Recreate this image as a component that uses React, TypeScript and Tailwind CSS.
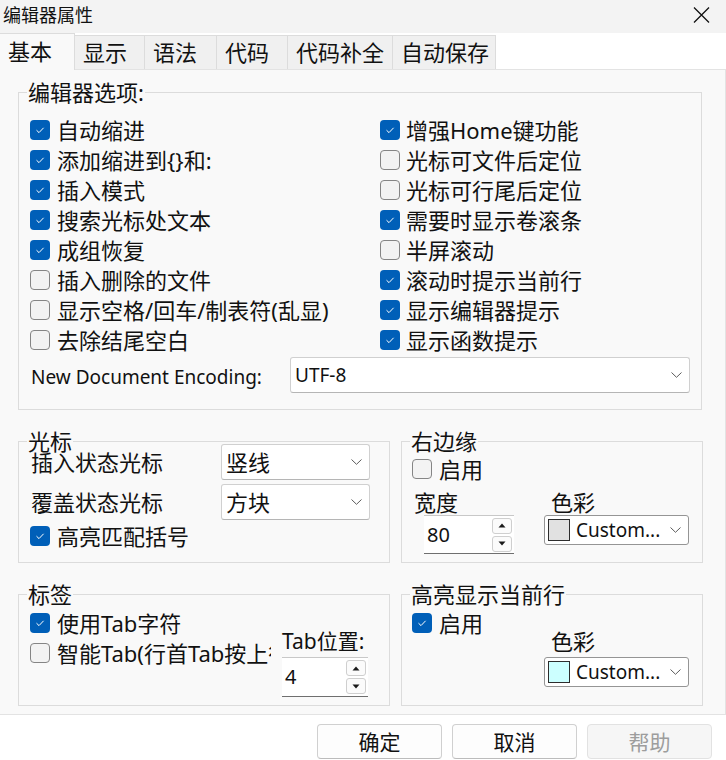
import type { ReactNode } from "react";

const FONT = "font-['Noto_Sans','Noto_Sans_CJK_SC',sans-serif]";

function Check({ on }: { on: boolean }) {
  if (on) {
    return (
      <span className="w-5 h-5 rounded-[4px] bg-[#005fb8] flex items-center justify-center shrink-0">
        <svg width="20" height="20" viewBox="0 0 20 20">
          <path d="M6.5 10.2 L9 12.6 L13.6 7.8" fill="none" stroke="#fff" strokeWidth="1" />
        </svg>
      </span>
    );
  }
  return <span className="w-5 h-5 rounded-[4px] border border-[#858585] bg-[#f3f3f3] shrink-0" />;
}

function CheckRow({ on, label, gap = "gap-[7px]" }: { on: boolean; label: string; gap?: string }) {
  return (
    <div className={`flex items-center h-[30px] ${gap} whitespace-nowrap`}>
      <Check on={on} />
      <span className="text-[22px] leading-[30px]">{label}</span>
    </div>
  );
}

function Chevron() {
  return (
    <svg width="11" height="6" viewBox="0 0 11 6" className="shrink-0">
      <path d="M0.5 0.5 L5.5 5.3 L10.5 0.5" fill="none" stroke="#5c5c5c" strokeWidth="1" />
    </svg>
  );
}

// group box: border with the caption sitting on the top line
function Group({ title, className, pad, children }: { title: string; className: string; pad: string; children: ReactNode }) {
  return (
    <div className={`border border-[#dcdcdc] ${className}`}>
      <div className="w-fit ml-[8px] -mt-[13px] px-[1px] bg-[#f9f9f9] text-[22px] leading-[24px] whitespace-nowrap">
        {title}
      </div>
      <div className={pad}>{children}</div>
    </div>
  );
}

function Select({ value, className }: { value: string; className: string }) {
  return (
    <div
      className={`flex items-center justify-between bg-white border border-[#d0d0d0] border-b-[#b5b5b5] rounded-[3px] pl-[4px] pr-[7px] ${className}`}
    >
      <span className="text-[22px] leading-[30px]">{value}</span>
      <Chevron />
    </div>
  );
}

function SpinArrow({ up }: { up: boolean }) {
  return (
    <span className="w-[20px] h-[16px] rounded-[3px] border border-[#cfcfcf] bg-[#fbfbfb] flex items-center justify-center">
      <svg width="8" height="5" viewBox="0 0 8 5">
        {up ? <path d="M0.5 4.5 L4 0.5 L7.5 4.5 Z" fill="#1a1a1a" /> : <path d="M0.5 0.5 L4 4.5 L7.5 0.5 Z" fill="#1a1a1a" />}
      </svg>
    </span>
  );
}

function Spin({ value, className }: { value: string; className: string }) {
  return (
    <div className={`flex items-center justify-between bg-white border-t border-t-[#c8c8c8] border-b border-b-[#6f6f6f] pl-[3px] pr-[2px] ${className}`}>
      <span className="text-[20px] leading-[30px]">{value}</span>
      <div className="flex flex-col gap-[2px]">
        <SpinArrow up />
        <SpinArrow up={false} />
      </div>
    </div>
  );
}

function ColorCombo({ swatch, className }: { swatch: string; className: string }) {
  return (
    <div className={`flex items-center bg-white border border-[#959595] rounded-[3px] pl-[3px] pr-[7px] ${className}`}>
      <span className={`w-[22px] h-[22px] border border-[#2d2d2d] shrink-0 ${swatch}`} />
      <span className="ml-[6px] text-[19px] leading-[26px] flex-1">Custom...</span>
      <Chevron />
    </div>
  );
}

const LEFT_OPTS = [
  { on: true, label: "自动缩进" },
  { on: true, label: "添加缩进到{}和:" },
  { on: true, label: "插入模式" },
  { on: true, label: "搜索光标处文本" },
  { on: true, label: "成组恢复" },
  { on: false, label: "插入删除的文件" },
  { on: false, label: "显示空格/回车/制表符(乱显)" },
  { on: false, label: "去除结尾空白" },
];

const RIGHT_OPTS = [
  { on: true, label: "增强Home键功能" },
  { on: false, label: "光标可文件后定位" },
  { on: false, label: "光标可行尾后定位" },
  { on: true, label: "需要时显示卷滚条" },
  { on: false, label: "半屏滚动" },
  { on: true, label: "滚动时提示当前行" },
  { on: true, label: "显示编辑器提示" },
  { on: true, label: "显示函数提示" },
];

const TABS = [
  { label: "基本", w: "w-[75px]" },
  { label: "显示", w: "w-[70px]" },
  { label: "语法", w: "w-[72px]" },
  { label: "代码", w: "w-[71px]" },
  { label: "代码补全", w: "w-[105px]" },
  { label: "自动保存", w: "w-[103px]" },
];

export default function App() {
  return (
    <div className={`w-[726px] h-[760px] bg-white text-[#111] overflow-hidden ${FONT}`}>
      {/* Title bar */}
      <div className="h-[33px] bg-[#f3f3f3] flex items-center justify-between pl-[3px] pr-[16px] pb-[3px]">
        <span className="text-[18px] leading-[24px]">编辑器属性</span>
        <svg width="17" height="16" viewBox="0 0 17 16">
          <path d="M1 0.5 L16 15.5 M16 0.5 L1 15.5" stroke="#111" strokeWidth="1.3" />
        </svg>
      </div>

      {/* Tabs */}
      <div className="h-[36px] flex items-end">
        {TABS.map((t, i) =>
          i === 0 ? (
            <div
              key={t.label}
              className={`${t.w} h-[37px] -mb-px relative z-10 bg-[#f9f9f9] border-t border-r border-[#dcdcdc] pl-[8px] pt-[2px] text-[22px] leading-[30px]`}
            >
              {t.label}
            </div>
          ) : (
            <div
              key={t.label}
              className={`${t.w} h-[34px] bg-[#f0f0f0] border-t border-r border-[#dcdcdc] pl-[8px] pt-[1px] text-[22px] leading-[30px] whitespace-nowrap`}
            >
              {t.label}
            </div>
          )
        )}
      </div>

      {/* Page */}
      <div className="h-[646px] bg-[#f9f9f9] border-t border-b border-r border-[#e3e3e3] pt-[22px] pl-[18px]">
        <Group title="编辑器选项:" className="w-[684px] h-[318px]" pad="pl-[11px]">
          <div className="grid grid-cols-[350px_1fr] mt-[11px]">
            <div className="flex flex-col">
              {LEFT_OPTS.map((o) => (
                <CheckRow key={o.label} on={o.on} label={o.label} />
              ))}
            </div>
            <div className="flex flex-col">
              {RIGHT_OPTS.map((o) => (
                <CheckRow key={o.label} on={o.on} label={o.label} gap="gap-[6px]" />
              ))}
            </div>
          </div>
          <div className="flex items-center mt-[2px] h-[36px]">
            <span className="w-[260px] pl-[1px] pt-[4px] text-[19px] leading-[24px] whitespace-nowrap">New Document Encoding:</span>
            <div className="w-[400px] h-[36px] bg-white border border-[#d0d0d0] border-b-[#b5b5b5] rounded-[3px] flex items-center justify-between pl-[4px] pr-[7px]">
              <span className="text-[19px] leading-[24px]">UTF-8</span>
              <Chevron />
            </div>
          </div>
        </Group>

        <div className="flex gap-[11px] mt-[31px]">
          <Group title="光标" className="w-[372px] h-[122px]" pad="pl-[11px]">
            <div className="grid grid-cols-[191px_149px] gap-y-[4px] -mt-[9px] items-center">
              <span className="pl-[1px] text-[22px] leading-[30px]">插入状态光标</span>
              <Select value="竖线" className="h-[36px]" />
              <span className="pl-[1px] text-[22px] leading-[30px]">覆盖状态光标</span>
              <Select value="方块" className="h-[36px]" />
            </div>
            <div className="mt-[1px]">
              <CheckRow on label="高亮匹配括号" />
            </div>
          </Group>

          <Group title="右边缘" className="w-[302px] h-[122px]" pad="pl-[10px]">
            <div className="mt-[1px]">
              <CheckRow on={false} label="启用" />
            </div>
            <div className="flex mt-[5px]">
              <div className="w-[132px] flex flex-col">
                <span className="pl-[2px] text-[22px] leading-[26px]">宽度</span>
                <Spin value="80" className="ml-[12px] w-[90px] h-[39px]" />
              </div>
              <div className="flex flex-col">
                <span className="pl-[7px] text-[22px] leading-[26px]">色彩</span>
                <ColorCombo swatch="bg-[#e1e1e1]" className="w-[145px] h-[30px]" />
              </div>
            </div>
          </Group>
        </div>

        <div className="flex gap-[11px] mt-[31px]">
          <Group title="标签" className="w-[372px] h-[112px]" pad="pl-[11px]">
            <div className="flex mt-[2px]">
              <div className="w-[241px] overflow-hidden">
                <CheckRow on label="使用Tab字符" />
                <CheckRow on={false} label="智能Tab(行首Tab按上行缩进)" />
              </div>
              <div className="ml-[11px] mt-[21px] flex flex-col">
                <span className="text-[21px] leading-[24px] whitespace-nowrap">Tab位置:</span>
                <Spin value="4" className="mt-[4px] w-[86px] h-[40px]" />
              </div>
            </div>
          </Group>

          <Group title="高亮显示当前行" className="w-[302px] h-[112px]" pad="pl-[10px]">
            <div className="mt-[2px]">
              <CheckRow on label="启用" />
            </div>
            <div className="ml-[132px] -mt-[9px] flex flex-col">
              <span className="pl-[7px] text-[22px] leading-[24px]">色彩</span>
              <ColorCombo swatch="bg-[#ccffff]" className="mt-[4px] w-[145px] h-[30px]" />
            </div>
          </Group>
        </div>
      </div>

      {/* Buttons */}
      <div className="flex justify-end gap-[10px] pr-[14px] mt-[9px]">
        <button className="w-[125px] h-[35px] rounded-[4px] border border-[#d0d0d0] border-b-[#bcbcbc] bg-[#fdfdfd] text-[21px] leading-[30px]">
          确定
        </button>
        <button className="w-[125px] h-[35px] rounded-[4px] border border-[#d0d0d0] border-b-[#bcbcbc] bg-[#fdfdfd] text-[21px] leading-[30px]">
          取消
        </button>
        <button className="w-[125px] h-[35px] rounded-[4px] border border-[#e2e2e2] bg-[#f6f6f6] text-[#9d9d9d] text-[21px] leading-[30px]">
          帮助
        </button>
      </div>
    </div>
  );
}
